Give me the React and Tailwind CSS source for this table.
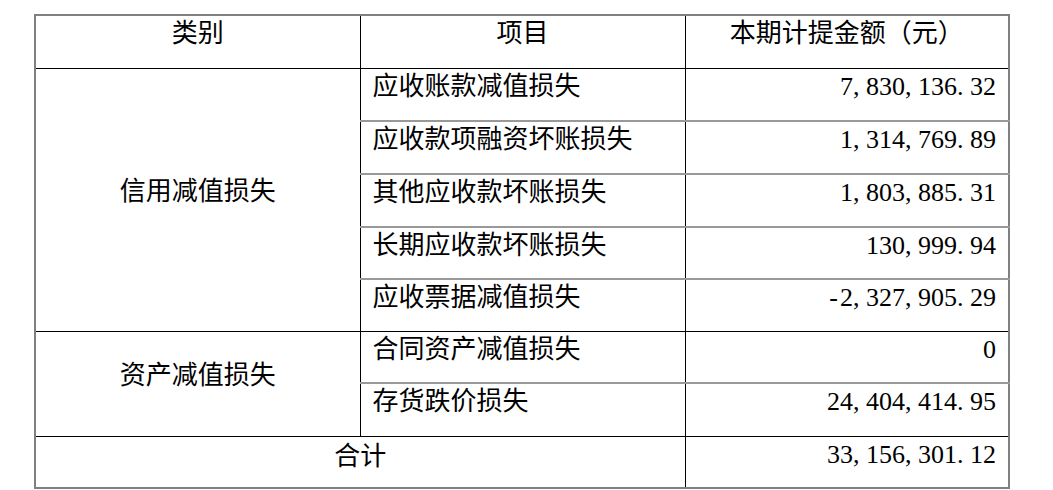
import React from "react";

const rows = [
  { group: "信用减值损失", span: 5, item: "应收账款减值损失", amount: "7,830,136.32", h: "h-[53px]" },
  { item: "应收款项融资坏账损失", amount: "1,314,769.89", h: "h-[53px]" },
  { item: "其他应收款坏账损失", amount: "1,803,885.31", h: "h-[53px]" },
  { item: "长期应收款坏账损失", amount: "130,999.94", h: "h-[52px]" },
  { item: "应收票据减值损失", amount: "-2,327,905.29", h: "h-[52px]", last: true },
  { group: "资产减值损失", span: 2, item: "合同资产减值损失", amount: "0", h: "h-[52px]" },
  { item: "存货跌价损失", amount: "24,404,414.95", h: "h-[53px]", last: true },
];

// SimSun-like half-width cells for every character of a number
const Amount = ({ value }) => (
  <span className="inline-flex">
    {value.split("").map((ch, i) => (
      <span
        key={i}
        className={
          ch === "," || ch === "."
            ? "inline-block w-[13px] text-left"
            : "inline-block w-[13px] text-center"
        }
      >
        {ch}
      </span>
    ))}
  </span>
);

const App = () => {
  return (
    <div className="w-[1053px] h-[490px] bg-white pt-[14px] pl-[34px] font-['Liberation_Serif','Noto_Sans_CJK_SC',serif] text-[26px] leading-[36px] text-black">
      <table className="w-[974px] table-fixed border-collapse border-2 border-[#808080]">
        <colgroup>
          <col className="w-[325px]" />
          <col className="w-[325px]" />
          <col className="w-[324px]" />
        </colgroup>
        <thead>
          <tr className="h-[53px]">
            <th className="border border-black align-top text-center font-normal">类别</th>
            <th className="border border-black align-top text-center font-normal">项目</th>
            <th className="border border-black align-top text-center font-normal">本期计提金额（元）</th>
          </tr>
        </thead>
        <tbody>
          {rows.map((r, i) => (
            <tr key={i} className={r.h}>
              {r.group && (
                <td
                  rowSpan={r.span}
                  className="border border-black align-middle text-center pb-[16px]"
                >
                  {r.group}
                </td>
              )}
              <td
                className={
                  r.last
                    ? "border-l border-r border-l-black border-r-black border-b border-b-black align-top pl-[12px]"
                    : "border-l border-r border-l-black border-r-black border-b-2 border-b-[#999] align-top pl-[12px]"
                }
              >
                {r.item}
              </td>
              <td
                className={
                  r.last
                    ? "border-b border-b-black align-top text-right pr-[12px]"
                    : "border-b-2 border-b-[#999] align-top text-right pr-[12px]"
                }
              >
                <Amount value={r.amount} />
              </td>
            </tr>
          ))}
          <tr className="h-[52px]">
            <td colSpan={2} className="border border-black align-top text-center pt-[2px]">
              合计
            </td>
            <td className="border border-black align-top text-right pr-[12px]">
              <Amount value="33,156,301.12" />
            </td>
          </tr>
        </tbody>
      </table>
    </div>
  );
};

export default App;
